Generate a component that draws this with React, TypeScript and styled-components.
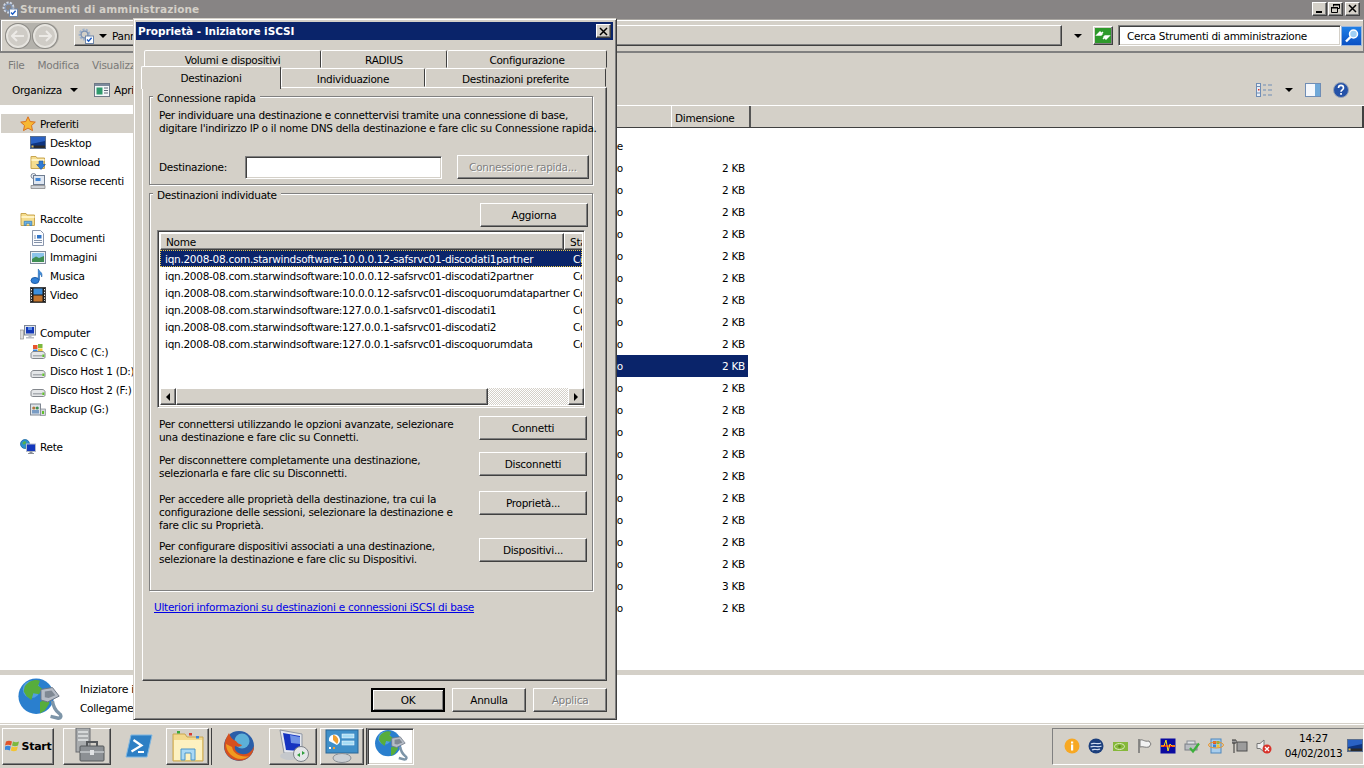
import React from 'react';
import styled, { createGlobalStyle, css } from 'styled-components';

const FACE = '#d4d0c8';
const NAVY = '#0a246a';
const UI_FONT = '"DejaVu Sans", "Liberation Sans", sans-serif';

const GlobalStyle = createGlobalStyle`
  html, body { margin: 0; padding: 0; background: #fff; overflow: hidden; }
  * { box-sizing: border-box; }
  body { font-family: ${UI_FONT}; font-size: 10.5px; letter-spacing: -0.28px; color: #000; }
  svg { display: block; flex: none; }
`;

const raised = css`
  background: ${FACE};
  border: 1px solid;
  border-color: #fff #404040 #404040 #fff;
  box-shadow: inset -1px -1px 0 #808080;
`;

const sunken = css`
  border: 1px solid;
  border-color: #808080 #fff #fff #808080;
  box-shadow: inset 1px 1px 0 #404040, inset -1px -1px 0 ${FACE};
`;

/* icons */
const GearIcon = ({ light }: { light?: boolean }) => (
  <svg width="16" height="16" viewBox="0 0 16 16">
    <circle cx="6.5" cy="6.5" r="4.6" fill="none" stroke={light ? '#cfd8e6' : '#9fb2cc'} strokeWidth="2.6" strokeDasharray="2 1.2" />
    <circle cx="6.5" cy="6.5" r="3.4" fill="none" stroke="#7f93b2" strokeWidth="1.4" />
    <rect x="7.5" y="8" width="8" height="7.5" fill="#fff" stroke="#6f86a8" />
    <path d="M9 11.5l1.6 1.8 3-3.6" fill="none" stroke="#1c5cc4" strokeWidth="1.4" />
  </svg>
);
const StarIcon = () => (
  <svg width="16" height="16" viewBox="0 0 16 16">
    <path d="M8 .8l2.2 4.7 5.1.6-3.8 3.4 1 5.1L8 12.1l-4.5 2.5 1-5.1L.7 6.1l5.1-.6z" fill="#f7b733" stroke="#d9701e" />
  </svg>
);
const DesktopIcon = () => (
  <svg width="16" height="16" viewBox="0 0 16 16">
    <rect x=".5" y="1.5" width="15" height="12" fill="#2a62c4" stroke="#5b6f8e" />
    <path d="M1 9l14-3v7H1z" fill="#0d3480" />
    <rect x="4" y="10.5" width="11" height="2.5" fill="#2b2b2b" />
    <rect x="1.5" y="10.5" width="2" height="2" fill="#e8b83a" />
  </svg>
);
const FolderIcon = ({ badge }: { badge?: 'down' | 'lib' }) => (
  <svg width="16" height="16" viewBox="0 0 16 16">
    <path d="M1 2.5h5l1 1.5h7.5v10.5H1z" fill="#f5dd8e" stroke="#c9a650" />
    <path d="M1.5 5h13v2h-13z" fill="#fff3c4" />
    {badge === 'down' && <path d="M9 7h4v3.5h2.4L11 15.5l-4.4-5H9z" fill="#2f7bd6" stroke="#17509c" strokeWidth=".6" />}
    {badge === 'lib' && <path d="M4.2 14.5v-4.2h7.6v4.2h-2v-2.2H6.2v2.2z" fill="#6cb2e6" stroke="#2f78b8" strokeWidth=".7" />}
  </svg>
);
const RecentIcon = () => (
  <svg width="16" height="16" viewBox="0 0 16 16">
    <circle cx="3.5" cy="3" r="2.5" fill="#e9eef5" stroke="#7c8798" />
    <rect x="3.5" y="2.5" width="11" height="9" fill="#dfe7f2" stroke="#6f7d91" />
    <rect x="5.5" y="5" width="5" height="3" fill="#3f86d8" />
    <path d="M1 12.5h14v3H1z" fill="#cfd2d6" stroke="#7d7d7d" strokeWidth=".7" />
  </svg>
);
const DocIcon = () => (
  <svg width="16" height="16" viewBox="0 0 16 16">
    <path d="M2.5.5h8l3 3v12h-11z" fill="#fbfcff" stroke="#8b97ad" />
    <rect x="7" y="5" width="4.5" height="3.5" fill="#2f74c8" />
    <path d="M4 6h2M4 8h2M4 10.5h8M4 12.5h8" stroke="#8492a9" />
  </svg>
);
const PicturesIcon = () => (
  <svg width="16" height="16" viewBox="0 0 16 16">
    <rect x=".5" y="2.5" width="15" height="12" fill="#eef2f5" stroke="#7f8a99" />
    <rect x="2" y="4" width="12" height="9" fill="#8cc4ea" />
    <path d="M2 10l4-2.5 3 1.5 5-2v6H2z" fill="#3f8f52" />
  </svg>
);
const MusicIcon = () => (
  <svg width="16" height="16" viewBox="0 0 16 16">
    <ellipse cx="5" cy="12.5" rx="4" ry="3" fill="#2f7fd6" stroke="#1b5ca8" />
    <path d="M8.3 12V1c.8 2.8 4.8 3 3.4 8-.2-2-1.7-3-2.2-3.2V12z" fill="#3b8fe0" stroke="#1b5ca8" strokeWidth=".6" />
  </svg>
);
const VideoIcon = () => (
  <svg width="16" height="16" viewBox="0 0 16 16">
    <rect x=".5" y=".5" width="15" height="15" fill="#1d1d1d" stroke="#444" />
    <rect x="3.5" y="1.5" width="9" height="6" fill="#3d8fdc" />
    <rect x="3.5" y="8.5" width="9" height="6" fill="#c5762e" />
    <path d="M1.5 2v12M14.5 2v12" stroke="#eee" strokeDasharray="1.4 1.4" />
  </svg>
);
const ComputerIcon = () => (
  <svg width="16" height="16" viewBox="0 0 16 16">
    <rect x="0" y="5" width="3.5" height="9" fill="#dcdcdc" stroke="#8a8a8a" strokeWidth=".7" />
    <rect x="4.5" y=".5" width="11" height="9.5" fill="#dfe3ea" stroke="#7d8796" />
    <path d="M6 2h8v6.5H6z" fill="#1238b8" />
    <path d="M8 2h4v3H8z" fill="#5c8be8" />
    <path d="M8.5 10h3v2h2.5v1.5H6V12h2.5z" fill="#b8bcc4" />
  </svg>
);
const DiskIcon = ({ kind }: { kind?: 'system' | 'backup' }) => (
  <svg width="16" height="16" viewBox="0 0 16 16">
    {kind === 'system' && (
      <g>
        <rect x="3" y="1" width="4.5" height="4" fill="#e8562e" />
        <rect x="8" y="0" width="4.5" height="4" fill="#7cb83e" />
        <rect x="3" y="5.5" width="4.5" height="4" fill="#3a86dc" />
        <rect x="8" y="4.5" width="4.5" height="4" fill="#f3c431" />
      </g>
    )}
    {kind === 'backup' && (
      <g>
        <rect x=".5" y="3" width="10" height="11" fill="#dfe4ea" stroke="#7f8792" />
        <circle cx="3.8" cy="7" r="1.6" fill="#b5763f" />
        <circle cx="7.2" cy="7" r="1.6" fill="#3f8f52" />
        <rect x="2" y="9" width="7" height="3.5" fill="#7a9cc4" />
      </g>
    )}
    {kind !== 'backup' && <path d="M1 9.5c.5-1.3 1.5-2 3-2h8c1.5 0 2.5.7 3 2v3.5c0 .8-.5 1.5-1.5 1.5h-11c-1 0-1.5-.7-1.5-1.5z" fill="#e4e6e8" stroke="#83878c" />}
    {kind !== 'backup' && <rect x="3" y="11" width="9" height="1.5" fill="#a9adb2" />}
    <rect x="12.3" y="10.5" width="2" height="2.5" fill="#60c02c" />
    {kind === 'backup' && <rect x="10.5" y="8" width="5" height="6.5" fill="#d3d6da" stroke="#7f8792" strokeWidth=".7" />}
    {kind === 'backup' && <rect x="12" y="10" width="2" height="3" fill="#60c02c" />}
  </svg>
);
const NetworkIcon = () => (
  <svg width="16" height="16" viewBox="0 0 16 16">
    <circle cx="5" cy="5" r="4.5" fill="#2e8fd0" stroke="#14619c" strokeWidth=".7" />
    <path d="M2.5 3.5l2-1.5 2 1-1.5 2.5-2.2-.3zM6 6.5l2 .5-1 2-1.5-.5z" fill="#55b04a" />
    <rect x="6.5" y="5" width="9" height="7.5" fill="#1437bd" stroke="#b5bcc8" />
    <path d="M9.5 12.5h3v1.5h1.5v1h-6v-1h1.500z" fill="#8a8f98" />
  </svg>
);
const GlobeIcon = ({ size }: { size: number }) => (
  <svg width={size} height={size} viewBox="0 0 48 48">
    <circle cx="20" cy="20" r="18.500" fill="#2a7fce" />
    <circle cx="15" cy="13" r="9" fill="#6fb9ee" opacity=".55" />
    <path d="M8 10c4-6 11-8 16-6l-2 5 4 3-3 6-6-1-2 7-5-4-3-5zM24 26l7-3 3 4-5 8-5 3z" fill="#57ad3c" />
    <path d="M25 13l12-2 7 9-12 6-7-2z" fill="#b6bcc6" stroke="#6d7684" strokeWidth="1" />
    <path d="M29 15l7-1 4 5-7 3-4-1z" fill="#7f8893" />
    <path d="M37 25c1 7 3 10 7 13 3 2 2 5-1 5l-8-2" fill="none" stroke="#7d95a8" strokeWidth="3.500" />
  </svg>
);
const ToolsIcon = () => (
  <svg width="36" height="36" viewBox="0 0 36 36">
    <rect x="7" y="0" width="14" height="24" fill="#a9acae" stroke="#6a6d70" />
    <path d="M9 4h10M9 8h10M9 12h10" stroke="#e4e6e8" strokeWidth="1.500" />
    <rect x="11" y="18" width="24" height="15" rx="1" fill="#8c9094" stroke="#55585b" />
    <path d="M18 18v-4h10v4" fill="none" stroke="#55585b" strokeWidth="2" />
    <path d="M11 24h24" stroke="#c5c8cb" strokeWidth="1.500" />
    <rect x="21" y="22" width="4" height="5" fill="#e0e2e4" />
  </svg>
);
const ShellIcon = () => (
  <svg width="30" height="30" viewBox="0 0 30 30">
    <path d="M7 4h21l-5 22H2z" fill="#2d7fc4" stroke="#7fb7e2" />
    <path d="M9.500 9l8 5.500-10 6" fill="none" stroke="#fff" strokeWidth="2.200" />
    <path d="M14 21h6" stroke="#fff" strokeWidth="2" />
  </svg>
);
const LibraryIcon = () => (
  <svg width="34" height="34" viewBox="0 0 34 34">
    <path d="M2 5h12l2 3h16v24H2z" fill="#f2d98c" stroke="#c9a650" />
    <rect x="6" y="2" width="3" height="2.500" fill="#38a838" />
    <rect x="18" y="4" width="3" height="2.500" fill="#d83c30" />
    <rect x="25" y="7" width="3" height="2.500" fill="#3a86dc" />
    <path d="M3 11h28v20H3z" fill="#fdf1c0" />
    <path d="M10 31V20h14v11h-4v-7h-6v7z" fill="#a8d8f5" stroke="#4b94c8" />
  </svg>
);
const FirefoxIcon = () => (
  <svg width="32" height="32" viewBox="0 0 32 32">
    <circle cx="16" cy="16" r="15" fill="#2a5ea8" />
    <circle cx="19" cy="11" r="7.500" fill="#5db0d8" />
    <path d="M6 3c-3 5-6 11-4 18 3 8 12 11 19 9 6-2 10-8 10-14-2 6-7 9-12 8-5-.5-8-4-7-8 3 1 6 1 7-1-3-1-5-2-6-4-3-1-6-4-7-8z" fill="#d6501e" />
    <path d="M3 14c0 8 7 15 15 15 3 0 6-1 8-3-7 2-16-2-17-9z" fill="#f09a20" />
  </svg>
);
const RdpIcon = () => (
  <svg width="34" height="34" viewBox="0 0 34 34">
    <path d="M4 1l22 4v20L8 24z" fill="#e4e7ee" stroke="#8f96a2" />
    <path d="M7 4l17 3v15L10 21z" fill="#1533c0" />
    <path d="M14 6l10 2v7l-9-1z" fill="#6f92e6" />
    <ellipse cx="14" cy="27" rx="10" ry="4" fill="#c5c8cc" />
    <circle cx="25" cy="25" r="7.500" fill="#e4e6e8" stroke="#7d8288" />
    <path d="M21 26l3-2v4zM29 24l-3 2v-4z" fill="#2f9e3c" />
  </svg>
);
const PanelIcon = () => (
  <svg width="34" height="34" viewBox="0 0 34 34">
    <rect x="1" y="1" width="32" height="23" fill="#3f8fc8" stroke="#2a6696" />
    <path d="M4 12a5.500 5.500 0 1 1 8 4z" fill="#fff" />
    <path d="M8 11V6a5.500 5.500 0 0 1 4 9z" fill="#f0a030" />
    <rect x="17" y="5" width="12" height="4" fill="#a6dcf5" stroke="#fff" strokeWidth=".5" />
    <rect x="17" y="12" width="12" height="4" fill="#a6dcf5" stroke="#fff" strokeWidth=".5" />
    <rect x="4" y="18" width="2" height="2" fill="#fff" />
    <rect x="8" y="18" width="2" height="2" fill="#f0a030" />
    <ellipse cx="17" cy="29" rx="9" ry="4.500" fill="#ccd0d4" stroke="#8a8f95" />
  </svg>
);
const WinFlag = () => (
  <svg width="16" height="16" viewBox="0 0 16 16">
    <path d="M1 3.500c2-1 4-1 6 0l-1 4c-2-1-4-1-6 0z" fill="#e0542c" />
    <path d="M8 3.500c2 1 4 1 6 0l-1 4c-2 1-4 1-6 0z" fill="#7cb83e" />
    <path d="M0 8.500c2-1 4-1 5.800 0l-1 4c-2-1-4-1-5.800 0z" fill="#3a86dc" />
    <path d="M6.800 8.500c2 1 4 1 6 0l-1 4c-2 1-4 1-6 0z" fill="#f3c431" />
  </svg>
);

const TrayGlyphs: React.ReactNode[] = [
  <g key="info"><circle cx="8" cy="8" r="7.500" fill="#f7a823" /><rect x="7" y="6.500" width="2.200" height="6" fill="#fff" /><rect x="7" y="3.500" width="2.200" height="2" fill="#fff" /></g>,
  <g key="dell"><circle cx="8" cy="8" r="7.500" fill="#1c3f7c" /><path d="M3 6c3-2 7 1 10-1M2.500 9c3-2 8 1 11-1M4 12c2-1.500 6 .5 8-1" stroke="#cfdcf0" strokeWidth="1.200" fill="none" /></g>,
  <g key="nvidia"><rect x="1" y="4" width="15" height="9" fill="#86b83a" /><ellipse cx="7.500" cy="8.500" rx="5" ry="3" fill="none" stroke="#dcebc0" /><circle cx="7.500" cy="8.500" r="1.300" fill="#5c8c1e" /></g>,
  <g key="flag"><path d="M3 1v14" stroke="#6b6b6b" strokeWidth="1.400" /><path d="M4 2c3-1 4 2 9 1l2 3-2 3c-4 1-6-1-9 0z" fill="#f2f2f2" stroke="#7a7a7a" /></g>,
  <g key="perf"><rect x=".5" y=".5" width="15" height="15" fill="#0a0aa0" /><rect x="1" y="7" width="14" height="2" fill="#e81010" /><path d="M1 8l3 0 2-6 2 11 2-7 2 2h3" stroke="#f4e020" fill="none" /></g>,
  <g key="print"><rect x="1" y="6" width="12" height="6" fill="#b9bdc2" stroke="#7a7f85" /><rect x="3" y="3" width="8" height="3" fill="#e1e3e6" stroke="#8a8f95" /><path d="M6 10l3 3.500 6-8" stroke="#3db03c" strokeWidth="2.200" fill="none" /></g>,
  <g key="update"><rect x="3" y="1" width="10" height="14" fill="#a8cdec" stroke="#4f87bd" /><rect x="5" y="3" width="3" height="3" fill="#e0542c" /><rect x="8.500" y="3" width="3" height="3" fill="#7cb83e" /><rect x="5" y="6.500" width="3" height="3" fill="#3a86dc" /><rect x="8.500" y="6.500" width="3" height="3" fill="#f3c431" /><ellipse cx="8" cy="7" rx="7.500" ry="3" fill="none" stroke="#e8952a" /></g>,
  <g key="net"><rect x="5" y="4" width="10" height="9" fill="#9c9c9c" stroke="#4e4e4e" /><path d="M2 2v13M0 2h4v3H0z" stroke="#333" fill="#fff" /></g>,
  <g key="vol"><path d="M1 5.500h3L8 2v12L4 10.500H1z" fill="#efefef" stroke="#777" /><circle cx="11" cy="11" r="4.500" fill="#d8322a" /><path d="M9 9l4 4M13 9l-4 4" stroke="#fff" strokeWidth="1.300" /></g>,
];

/* explorer window */
const Desktop = styled.div`
  position: relative;
  width: 1364px;
  height: 768px;
  overflow: hidden;
  display: flex;
  flex-direction: column;
  background: #fff;
`;

const TitleBar = styled.div`
  height: 19px;
  flex: none;
  display: flex;
  align-items: center;
  justify-content: space-between;
  padding: 0 4px 2px 2px;
  background: #878484;
`;

const TitleText = styled.div`
  display: flex;
  align-items: center;
  gap: 2px;
  font-weight: bold;
  font-size: 10.5px;
  letter-spacing: 0.1px;
  color: ${FACE};
`;

const WinButtons = styled.div`
  display: flex;
  gap: 1px;
  & > button + button:last-child { margin-left: 1px; }
`;

const WinButton = styled.button`
  ${raised}
  width: 15px;
  height: 14px;
  padding: 0;
  display: flex;
  align-items: center;
  justify-content: center;
`;

const NavBar = styled.div`
  height: 34px;
  flex: none;
  display: flex;
  align-items: center;
  background: ${FACE};
  border: 1px solid #808080;
  border-top-color: #a8a5a0;
  border-bottom-width: 2px;
  box-shadow: inset 1px 1px 0 #fff;
  padding: 0 1px 0 4px;
`;

const NavPill = styled.div`
  width: 54px;
  height: 26px;
  border-radius: 13px;
  background: #b4b2ac;
  display: flex;
  align-items: center;
  gap: 3px;
  padding: 0 1px;
  flex: none;
`;

const NavCircle = styled.div`
  width: 24px;
  height: 24px;
  border-radius: 50%;
  background: #cfccc6;
  border: 2px solid #e6e4df;
  box-shadow: 0 0 0 1px #8c8a85;
  display: flex;
  align-items: center;
  justify-content: center;
`;

const AddressBox = styled.div`
  ${raised}
  margin-left: 15px;
  width: 988px;
  height: 21px;
  display: flex;
  align-items: center;
  padding-left: 3px;
  gap: 5px;
  flex: none;
  overflow: hidden;
`;

const Caret = styled.span`
  width: 0;
  height: 0;
  border: 4px solid transparent;
  border-top: 4px solid #000;
  border-bottom: 0;
  flex: none;
  display: inline-block;
`;

const NavCaret = styled(Caret)`
  margin-left: 12px;
`;

const RefreshButton = styled.div`
  ${raised}
  margin-left: 11px;
  width: 20px;
  height: 19px;
  flex: none;
  padding: 1px;
`;

const SearchField = styled.div`
  ${sunken}
  margin-left: 5px;
  width: 223px;
  height: 21px;
  background: #fff;
  display: flex;
  align-items: center;
  padding-left: 8px;
  flex: none;
`;

const SearchButton = styled.div`
  width: 21px;
  height: 20px;
  flex: none;
  border: 1px solid #9cb6dc;
  background: linear-gradient(#1f7fe6, #0a50c4);
  display: flex;
  align-items: center;
  justify-content: center;
`;

const MenuBar = styled.div`
  height: 24px;
  flex: none;
  background: ${FACE};
  display: flex;
  align-items: center;
  padding-left: 8px;
  gap: 13px;
  color: #7a7a78;
`;

const ToolBar = styled.div`
  height: 28px;
  flex: none;
  background: ${FACE};
  display: flex;
  align-items: center;
  padding: 0 15px 2px 12px;
`;

const ToolButton = styled.div`
  display: flex;
  align-items: center;
  gap: 4px;
  margin-right: 16px;
`;

const ToolCaret = styled(Caret)`
  margin-left: 4px;
`;

const ToolSpacer = styled.div`
  flex: 1;
`;

const ToolIcons = styled.div`
  display: flex;
  align-items: center;
  gap: 12px;
`;

const MainArea = styled.div`
  flex: 1;
  min-height: 0;
  display: grid;
  grid-template-columns: 150px 1fr;
  border-top: 1px solid #fff;
`;

const Sidebar = styled.nav`
  background: #fff;
  padding: 8px 0 0 1px;
  overflow: hidden;
`;

const TreeRoot = styled.div<{ $selected?: boolean; $top?: number }>`
  height: 19px;
  display: flex;
  align-items: center;
  gap: 4px;
  padding-left: 19px;
  margin-top: ${(p) => p.$top ?? 0}px;
  background: ${(p) => (p.$selected ? FACE : 'transparent')};
`;

const TreeItem = styled.div`
  height: 19px;
  display: flex;
  align-items: center;
  gap: 4px;
  padding-left: 29px;
  white-space: nowrap;
`;

const FileColumn = styled.section`
  display: flex;
  flex-direction: column;
  min-width: 0;
`;

const ColumnHeader = styled.div`
  height: 22px;
  flex: none;
  background: ${FACE};
  border-bottom: 1px solid #404040;
  border-right: 2px solid #404040;
  display: flex;
  justify-content: flex-end;
  padding-right: 611px;
`;

const HeaderCell = styled.div`
  width: 80px;
  border-left: 1px solid #fff;
  border-right: 2px solid #555;
  padding: 2px 0 0 3px;
  display: flex;
  align-items: center;
`;

const FileList = styled.div`
  padding-top: 7px;
  display: flex;
  flex-direction: column;
`;

const FileRow = styled.div<{ $selected?: boolean }>`
  width: 598px;
  height: 22px;
  display: grid;
  grid-template-columns: 473px 125px;
  align-items: center;
  color: ${(p) => (p.$selected ? '#fff' : '#000')};
  background: ${(p) => (p.$selected ? NAVY : 'transparent')};
`;

const TypeCell = styled.span`
  text-align: right;
  white-space: nowrap;
`;

const SizeCell = styled.span`
  text-align: right;
  padding-right: 3px;
`;

const DetailsPane = styled.div`
  height: 54px;
  flex: none;
  background: #fff;
  border-top: 5px solid ${FACE};
  display: flex;
  align-items: center;
  padding-left: 17px;
  gap: 17px;
`;

const DetailsText = styled.div`
  display: flex;
  flex-direction: column;
  gap: 6px;
  padding-bottom: 2px;
`;

const DetailsName = styled.span`
  font-size: 11px;
`;

/* taskbar */
const Taskbar = styled.footer`
  height: 44px;
  flex: none;
  background: ${FACE};
  border-top: 1px solid #fff;
  box-shadow: 0 -1px 0 ${FACE};
  display: flex;
  align-items: center;
  padding: 0 0 1px 2px;
`;

const StartButton = styled.div`
  ${raised}
  width: 52px;
  height: 37px;
  display: flex;
  align-items: center;
  justify-content: center;
  gap: 1px;
  font-weight: bold;
  font-size: 11px;
  margin-right: 9px;
`;

const TaskButton = styled.div<{ $flat?: boolean; $stacked?: boolean; $pressed?: boolean; $w?: number }>`
  ${(p) => (p.$flat ? 'border: 1px solid transparent;' : p.$pressed ? sunken : raised)}
  width: ${(p) => p.$w ?? 48}px;
  height: 37px;
  margin-right: 3px;
  display: flex;
  align-items: center;
  justify-content: center;
  flex: none;
  ${(p) => p.$flat && 'background: transparent;'}
  ${(p) => p.$pressed && 'background: #fff;'}
  ${(p) => p.$stacked && 'box-shadow: inset -1px -1px 0 #808080, 2px 0 0 #d4d0c8, 3px 0 0 #404040;'}
`;

const Tray = styled.div`
  margin-left: auto;
  width: 312px;
  height: 37px;
  border: 1px solid;
  border-color: #808080 #fff #fff #808080;
  display: flex;
  align-items: center;
  padding-left: 7px;
  flex: none;
`;

const TrayIcon = styled.div`
  width: 24px;
  display: flex;
  justify-content: center;
  flex: none;
`;

const Clock = styled.div`
  width: 72px;
  display: flex;
  flex-direction: column;
  align-items: center;
  gap: 2px;
  margin-left: 4px;
  line-height: 13px;
`;

/* dialog */
const Dialog = styled.div`
  position: absolute;
  left: 133px;
  top: 18px;
  width: 484px;
  height: 702px;
  background: ${FACE};
  padding: 3px 3px 3px 2px;
  border: 1px solid;
  border-color: ${FACE} #404040 #404040 ${FACE};
  box-shadow: inset 1px 1px 0 #fff, inset -1px -1px 0 #808080;
  display: flex;
  flex-direction: column;
`;

const DialogTitle = styled.div`
  height: 18px;
  flex: none;
  background: ${NAVY};
  color: #fff;
  font-weight: bold;
  font-size: 10.5px;
  letter-spacing: -0.05px;
  display: flex;
  align-items: center;
  justify-content: space-between;
  padding: 0 2px 0 2px;
  margin-left: 0;
`;

const CloseButton = styled(WinButton)`
  margin-right: 0;
`;

const DialogBody = styled.div`
  flex: 1;
  display: flex;
  flex-direction: column;
  padding: 10px 6px 0 5px;
`;

const TabRow = styled.div<{ $back?: boolean }>`
  display: flex;
  height: ${(p) => (p.$back ? 18 : 19)}px;
  padding-left: ${(p) => (p.$back ? 3 : 1)}px;
  flex: none;
`;

const Tab = styled.div<{ $w: number; $active?: boolean }>`
  width: ${(p) => p.$w}px;
  flex: none;
  background: ${FACE};
  border: 1px solid;
  border-color: #fff #404040 transparent #fff;
  border-radius: 2px 2px 0 0;
  display: flex;
  align-items: center;
  justify-content: center;
  padding-top: 2px;
  position: relative;
  ${(p) =>
    p.$active &&
    css`
      margin: -2px 0 -2px -1px;
      z-index: 1;
      padding-top: 0;
      border-bottom: 0;
    `}
`;

const TabPanel = styled.div`
  ${raised}
  height: 594px;
  flex: none;
  padding: 8px 13px 0 6px;
  margin-left: 1px;
`;

const Group = styled.div<{ $h: number; $top?: number }>`
  position: relative;
  height: ${(p) => p.$h}px;
  margin-top: ${(p) => p.$top ?? 0}px;
  border: 1px solid #808080;
  box-shadow: inset 1px 1px 0 #fff, 1px 1px 0 #fff;
  display: flex;
  flex-direction: column;
`;

const GroupLabel = styled.span`
  position: absolute;
  left: 3px;
  top: -5px;
  padding: 0 4px;
  line-height: 12px;
  background: ${FACE};
`;

const Paragraph = styled.p`
  margin: 0;
  line-height: 13px;
  white-space: nowrap;
`;

const QuickText = styled(Paragraph)`
  padding: 12px 0 0 9px;
`;

const QuickRow = styled.div`
  display: flex;
  align-items: center;
  margin-top: 20px;
  padding-left: 9px;
`;

const FieldLabel = styled.label`
  width: 86px;
  flex: none;
`;

const TextField = styled.div`
  ${sunken}
  width: 197px;
  height: 23px;
  background: #fff;
  flex: none;
`;

const Button = styled.button<{ $w?: number; $default?: boolean }>`
  ${raised}
  width: ${(p) => p.$w ?? 108}px;
  height: 24px;
  flex: none;
  padding: 0;
  font: inherit;
  letter-spacing: inherit;
  color: #000;
  ${(p) =>
    p.$default &&
    css`
      border: 2px solid #000;
      border-color: #000;
      box-shadow: inset 1px 1px 0 #fff, inset -1px -1px 0 #808080;
    `}
  &:disabled {
    color: #808080;
    text-shadow: 1px 1px 0 #fff;
  }
`;

const RapidButton = styled(Button)`
  margin-left: 15px;
`;

const RefreshRow = styled.div`
  display: flex;
  justify-content: flex-end;
  padding: 9px 4px 0 0;
`;

const ListBox = styled.div`
  ${sunken}
  margin: 3px 0 0 7px;
  width: 428px;
  height: 178px;
  background: #fff;
  padding: 2px;
  display: flex;
  flex-direction: column;
  flex: none;
`;

const ListHeader = styled.div`
  height: 17px;
  display: grid;
  grid-template-columns: 404px 20px;
  flex: none;
  overflow: hidden;
`;

const ListHeaderCell = styled.div`
  ${raised}
  padding-left: 5px;
  display: flex;
  align-items: center;
  overflow: hidden;
  white-space: nowrap;
`;

const ListRows = styled.div`
  flex: 1;
  min-height: 0;
`;

const ListRow = styled.div<{ $selected?: boolean }>`
  height: 17px;
  display: grid;
  grid-template-columns: 408px 16px;
  align-items: center;
  padding-left: 5px;
  white-space: nowrap;
  overflow: hidden;
  color: ${(p) => (p.$selected ? '#fff' : '#000')};
  background: ${(p) => (p.$selected ? NAVY : 'transparent')};
  outline: ${(p) => (p.$selected ? '1px dotted #e8c84a' : 'none')};
  outline-offset: -1px;
`;

const StatusCell = styled.span`
  overflow: hidden;
`;

const ScrollBar = styled.div`
  height: 17px;
  flex: none;
  display: grid;
  grid-template-columns: 16px 312px 80px 16px;
`;

const ScrollArrow = styled.div`
  ${raised}
  display: flex;
  align-items: center;
  justify-content: center;
`;

const ScrollThumb = styled.div`
  ${raised}
`;

const ScrollTrack = styled.div`
  background: repeating-conic-gradient(${FACE} 0 25%, #fff 0 50%) 0 0 / 2px 2px;
`;

const ActionRow = styled.div<{ $top: number }>`
  display: flex;
  justify-content: space-between;
  align-items: flex-start;
  margin-top: ${(p) => p.$top}px;
  padding: 0 5px 0 9px;
`;

const ActionButton = styled(Button)`
  margin-top: -2px;
`;

const MoreLink = styled.a`
  display: block;
  margin: 10px 0 0 5px;
  line-height: 13px;
  color: #0000e6;
  text-decoration: underline;
`;

const DialogFooter = styled.div`
  display: flex;
  justify-content: flex-end;
  gap: 7px;
  padding-top: 7px;
`;

const ScrollGlyph = ({ dir }: { dir: 'l' | 'r' }) => (
  <svg width="6" height="8" viewBox="0 0 6 8">
    <path d={dir === 'l' ? 'M5 0v8L1 4z' : 'M1 0v8l4-4z'} fill="#000" />
  </svg>
);

const NavArrow = ({ dir }: { dir: 'l' | 'r' }) => (
  <svg width="14" height="12" viewBox="0 0 14 12">
    <path d={dir === 'l' ? 'M6 1L1 6l5 5M1 6h12' : 'M8 1l5 5-5 5M13 6H1'} fill="none" stroke="#eceae6" strokeWidth="2" />
  </svg>
);

const targets = [
  'iqn.2008-08.com.starwindsoftware:10.0.0.12-safsrvc01-discodati1partner',
  'iqn.2008-08.com.starwindsoftware:10.0.0.12-safsrvc01-discodati2partner',
  'iqn.2008-08.com.starwindsoftware:10.0.0.12-safsrvc01-discoquorumdatapartner',
  'iqn.2008-08.com.starwindsoftware:127.0.0.1-safsrvc01-discodati1',
  'iqn.2008-08.com.starwindsoftware:127.0.0.1-safsrvc01-discodati2',
  'iqn.2008-08.com.starwindsoftware:127.0.0.1-safsrvc01-discoquorumdata',
];

const sizes = ['', '2 KB', '2 KB', '2 KB', '2 KB', '2 KB', '2 KB', '2 KB', '2 KB', '2 KB', '2 KB', '2 KB', '2 KB', '2 KB', '2 KB', '2 KB', '2 KB', '2 KB', '2 KB', '2 KB', '3 KB', '2 KB'];

export default function App() {
  return (
    <Desktop>
      <GlobalStyle />
      <TitleBar>
        <TitleText>
          <GearIcon light />
          Strumenti di amministrazione
        </TitleText>
        <WinButtons>
          <WinButton>
            <svg width="9" height="9" viewBox="0 0 9 9"><rect x="1" y="7" width="6" height="2" fill="#000" /></svg>
          </WinButton>
          <WinButton>
            <svg width="9" height="9" viewBox="0 0 9 9"><path d="M2.500 2.500V.5h6v4h-2M.5 3.500h6v5h-6z" fill="none" stroke="#000" /><path d="M2 0h7v1.500H2zM0 3h7v1.500H0z" /></svg>
          </WinButton>
          <WinButton>
            <svg width="9" height="9" viewBox="0 0 9 9"><path d="M1 1l7 7M8 1L1 8" stroke="#000" strokeWidth="1.500" /></svg>
          </WinButton>
        </WinButtons>
      </TitleBar>

      <NavBar>
        <NavPill>
          <NavCircle><NavArrow dir="l" /></NavCircle>
          <NavCircle><NavArrow dir="r" /></NavCircle>
        </NavPill>
        <AddressBox>
          <GearIcon />
          <Caret />
          <span>Pannello di controllo</span>
        </AddressBox>
        <NavCaret />
        <RefreshButton>
          <svg width="16" height="15" viewBox="0 0 16 15">
            <rect width="16" height="15" fill="#2f9a2c" />
            <path d="M2 7l3-3 2 2-1 1zM14 8l-3 3-2-2 1-1zM6 6l2-2M10 9l-2 2" stroke="#fff" strokeWidth="1.400" fill="#fff" />
          </svg>
        </RefreshButton>
        <SearchField>Cerca Strumenti di amministrazione</SearchField>
        <SearchButton>
          <svg width="16" height="16" viewBox="0 0 16 16">
            <circle cx="9.500" cy="6" r="4" fill="#9fd0f5" stroke="#fff" strokeWidth="1.500" />
            <path d="M6.500 9L2 13.500" stroke="#fff" strokeWidth="2.400" />
          </svg>
        </SearchButton>
      </NavBar>

      <MenuBar>
        <span>File</span>
        <span>Modifica</span>
        <span>Visualizza</span>
      </MenuBar>

      <ToolBar>
        <ToolButton>
          Organizza
          <ToolCaret />
        </ToolButton>
        <ToolButton>
          <svg width="16" height="14" viewBox="0 0 16 14">
            <rect x=".5" y=".5" width="15" height="13" fill="#f4f6f8" stroke="#6d7886" />
            <rect x="1" y="1" width="14" height="2" fill="#7d8a9c" />
            <rect x="2.500" y="4.500" width="6" height="7" fill="#2f9a6c" />
            <path d="M10 5h4M10 7.500h4M10 10h4" stroke="#5f6b7a" />
          </svg>
          Apri
        </ToolButton>
        <ToolSpacer />
        <ToolIcons>
          <svg width="17" height="14" viewBox="0 0 17 14">
            <rect x=".5" y=".5" width="4" height="13" fill="#e8eef6" stroke="#6f8db5" />
            <path d="M1 3.500h3M1 10h3" stroke="#6f8db5" />
            <rect x="2" y="6" width="1.500" height="1.500" fill="#d8322a" />
            <path d="M7 2h3M12 2h4M7 7h3M12 7h4M7 12h3M12 12h4" stroke="#6f8db5" />
          </svg>
          <Caret />
          <svg width="16" height="16" viewBox="0 0 16 16">
            <rect x=".5" y="1.500" width="15" height="13" fill="#f4f7fb" stroke="#6f8db5" />
            <rect x="10" y="2" width="5" height="12" fill="#6fa8d8" />
          </svg>
          <svg width="16" height="16" viewBox="0 0 16 16">
            <circle cx="8" cy="8" r="7.500" fill="#2552a8" stroke="#9aa4b4" />
            <path d="M5.500 6c0-3.500 5-3.500 5 0 0 2-2.500 1.800-2.500 3.800" fill="none" stroke="#fff" strokeWidth="1.600" />
            <rect x="7.200" y="11" width="1.700" height="1.800" fill="#fff" />
          </svg>
        </ToolIcons>
      </ToolBar>

      <MainArea>
        <Sidebar>
          <TreeRoot $selected><StarIcon />Preferiti</TreeRoot>
          <TreeItem><DesktopIcon />Desktop</TreeItem>
          <TreeItem><FolderIcon badge="down" />Download</TreeItem>
          <TreeItem><RecentIcon />Risorse recenti</TreeItem>
          <TreeRoot $top={19}><FolderIcon badge="lib" />Raccolte</TreeRoot>
          <TreeItem><DocIcon />Documenti</TreeItem>
          <TreeItem><PicturesIcon />Immagini</TreeItem>
          <TreeItem><MusicIcon />Musica</TreeItem>
          <TreeItem><VideoIcon />Video</TreeItem>
          <TreeRoot $top={19}><ComputerIcon />Computer</TreeRoot>
          <TreeItem><DiskIcon kind="system" />Disco C (C:)</TreeItem>
          <TreeItem><DiskIcon />Disco Host 1 (D:)</TreeItem>
          <TreeItem><DiskIcon />Disco Host 2 (F:)</TreeItem>
          <TreeItem><DiskIcon kind="backup" />Backup (G:)</TreeItem>
          <TreeRoot $top={19}><NetworkIcon />Rete</TreeRoot>
        </Sidebar>
        <FileColumn>
          <ColumnHeader>
            <HeaderCell>Dimensione</HeaderCell>
          </ColumnHeader>
          <FileList>
            {sizes.map((size, i) => (
              <FileRow key={i} $selected={i === 10}>
                <TypeCell>{i === 0 ? 'Cartella di file' : 'Collegamento'}</TypeCell>
                <SizeCell>{size}</SizeCell>
              </FileRow>
            ))}
          </FileList>
        </FileColumn>
      </MainArea>

      <DetailsPane>
        <GlobeIcon size={46} />
        <DetailsText>
          <DetailsName>Iniziatore iSCSI</DetailsName>
          <span>Collegamento</span>
        </DetailsText>
      </DetailsPane>

      <Taskbar>
        <StartButton><WinFlag />Start</StartButton>
        <TaskButton><ToolsIcon /></TaskButton>
        <TaskButton $flat $w={49}><ShellIcon /></TaskButton>
        <TaskButton $stacked $w={43}><LibraryIcon /></TaskButton>
        <TaskButton $flat $w={54}><FirefoxIcon /></TaskButton>
        <TaskButton><RdpIcon /></TaskButton>
        <TaskButton $stacked $w={44}><PanelIcon /></TaskButton>
        <TaskButton $pressed $w={47}><GlobeIcon size={34} /></TaskButton>
        <Tray>
          {TrayGlyphs.map((glyph, i) => (
            <TrayIcon key={i}><svg width="16" height="16" viewBox="0 0 16 16">{glyph}</svg></TrayIcon>
          ))}
          <Clock>
            <span>14:27</span>
            <span>04/02/2013</span>
          </Clock>
          <DesktopIcon />
        </Tray>
      </Taskbar>

      <Dialog>
        <DialogTitle>
          Proprietà - Iniziatore iSCSI
          <CloseButton>
            <svg width="9" height="9" viewBox="0 0 9 9"><path d="M1 1l7 7M8 1L1 8" stroke="#000" strokeWidth="1.500" /></svg>
          </CloseButton>
        </DialogTitle>
        <DialogBody>
          <TabRow $back>
            <Tab $w={177}>Volumi e dispositivi</Tab>
            <Tab $w={126}>RADIUS</Tab>
            <Tab $w={160}>Configurazione</Tab>
          </TabRow>
          <TabRow>
            <Tab $w={140} $active>Destinazioni</Tab>
            <Tab $w={144}>Individuazione</Tab>
            <Tab $w={181}>Destinazioni preferite</Tab>
          </TabRow>
          <TabPanel>
            <Group $h={89}>
              <GroupLabel>Connessione rapida</GroupLabel>
              <QuickText>
                Per individuare una destinazione e connettervisi tramite una connessione di base,<br />
                digitare l'indirizzo IP o il nome DNS della destinazione e fare clic su Connessione rapida.
              </QuickText>
              <QuickRow>
                <FieldLabel>Destinazione:</FieldLabel>
                <TextField />
                <RapidButton $w={132} disabled>Connessione rapida...</RapidButton>
              </QuickRow>
            </Group>
            <Group $h={398} $top={8}>
              <GroupLabel>Destinazioni individuate</GroupLabel>
              <RefreshRow><Button>Aggiorna</Button></RefreshRow>
              <ListBox>
                <ListHeader>
                  <ListHeaderCell>Nome</ListHeaderCell>
                  <ListHeaderCell>Stato</ListHeaderCell>
                </ListHeader>
                <ListRows>
                  {targets.map((t, i) => (
                    <ListRow key={t} $selected={i === 0}>
                      <span>{t}</span>
                      <StatusCell>Connesso</StatusCell>
                    </ListRow>
                  ))}
                </ListRows>
                <ScrollBar>
                  <ScrollArrow><ScrollGlyph dir="l" /></ScrollArrow>
                  <ScrollThumb />
                  <ScrollTrack />
                  <ScrollArrow><ScrollGlyph dir="r" /></ScrollArrow>
                </ScrollBar>
              </ListBox>
              <ActionRow $top={10}>
                <Paragraph>
                  Per connettersi utilizzando le opzioni avanzate, selezionare<br />
                  una destinazione e fare clic su Connetti.
                </Paragraph>
                <ActionButton>Connetti</ActionButton>
              </ActionRow>
              <ActionRow $top={10}>
                <Paragraph>
                  Per disconnettere completamente una destinazione,<br />
                  selezionarla e fare clic su Disconnetti.
                </Paragraph>
                <ActionButton>Disconnetti</ActionButton>
              </ActionRow>
              <ActionRow $top={13}>
                <Paragraph>
                  Per accedere alle proprietà della destinazione, tra cui la<br />
                  configurazione delle sessioni, selezionare la destinazione e<br />
                  fare clic su Proprietà.
                </Paragraph>
                <ActionButton>Proprietà...</ActionButton>
              </ActionRow>
              <ActionRow $top={8}>
                <Paragraph>
                  Per configurare dispositivi associati a una destinazione,<br />
                  selezionare la destinazione e fare clic su Dispositivi.
                </Paragraph>
                <ActionButton>Dispositivi...</ActionButton>
              </ActionRow>
            </Group>
            <MoreLink href="#">Ulteriori informazioni su destinazioni e connessioni iSCSI di base</MoreLink>
          </TabPanel>
          <DialogFooter>
            <Button $w={74} $default>OK</Button>
            <Button $w={74}>Annulla</Button>
            <Button $w={74} disabled>Applica</Button>
          </DialogFooter>
        </DialogBody>
      </Dialog>
    </Desktop>
  );
}
